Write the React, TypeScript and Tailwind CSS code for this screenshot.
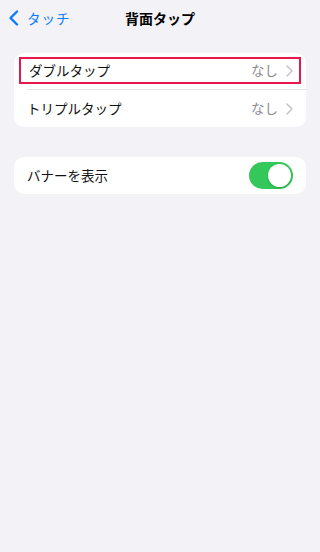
const font = { fontFamily: '"Noto Sans CJK JP", "Noto Sans", sans-serif' };

const Chevron = () => (
  <svg width="7" height="12" viewBox="0 0 7 12" fill="none" className="ml-[8px]">
    <path d="M1 1l5 5-5 5" stroke="#c4c4c7" strokeWidth="1.5" strokeLinecap="round" strokeLinejoin="round" />
  </svg>
);

export default function App() {
  return (
    <div className="w-[320px] h-[552px] bg-[#f2f2f7] text-[#000]" style={font}>
      <header className="relative flex items-center h-[36px]">
        <div className="flex items-center pl-[8px] text-[#0a7aff]">
          <svg width="11" height="16" viewBox="0 0 11 16" fill="none">
            <path d="M9 1.5L2.5 8 9 14.5" stroke="#0a7aff" strokeWidth="2.4" strokeLinecap="round" strokeLinejoin="round" />
          </svg>
          <span className="ml-[8px] text-[13.5px] tracking-[1px]">タッチ</span>
        </div>
        <h1 className="absolute left-0 right-0 text-center text-[14px] font-bold pointer-events-none">背面タップ</h1>
      </header>

      <div className="px-[14px] pt-[17px]">
        <div className="bg-white rounded-[10px] pt-[4px]">
          <div className="mx-[5px] h-[27px] border-2 border-[#e8174b] flex items-center pl-[8px] pr-[6px]">
            <span className="flex-1 text-[13.5px] text-[#111]">ダブルタップ</span>
            <span className="text-[13.5px] text-[#8a8a8e]">なし</span>
            <Chevron />
          </div>
          <div className="ml-[13px] h-[1px] mt-[5px] bg-[#e3e3e8]" />
          <div className="h-[37px] flex items-center pl-[13px] pr-[13px]">
            <span className="flex-1 text-[13.5px] text-[#111]">トリプルタップ</span>
            <span className="text-[13.5px] text-[#8a8a8e]">なし</span>
            <Chevron />
          </div>
        </div>

        <div className="mt-[30px] bg-white rounded-[10px] h-[37px] flex items-center pl-[13px] pr-[13px]">
          <span className="flex-1 text-[13.5px] text-[#111]">バナーを表示</span>
          <div className="w-[44px] h-[27px] rounded-full bg-[#34c759] flex items-center justify-end pr-[2px]">
            <div className="w-[23px] h-[23px] rounded-full bg-white shadow-[0_1px_2px_rgba(0,0,0,0.2)]" />
          </div>
        </div>
      </div>
    </div>
  );
}
